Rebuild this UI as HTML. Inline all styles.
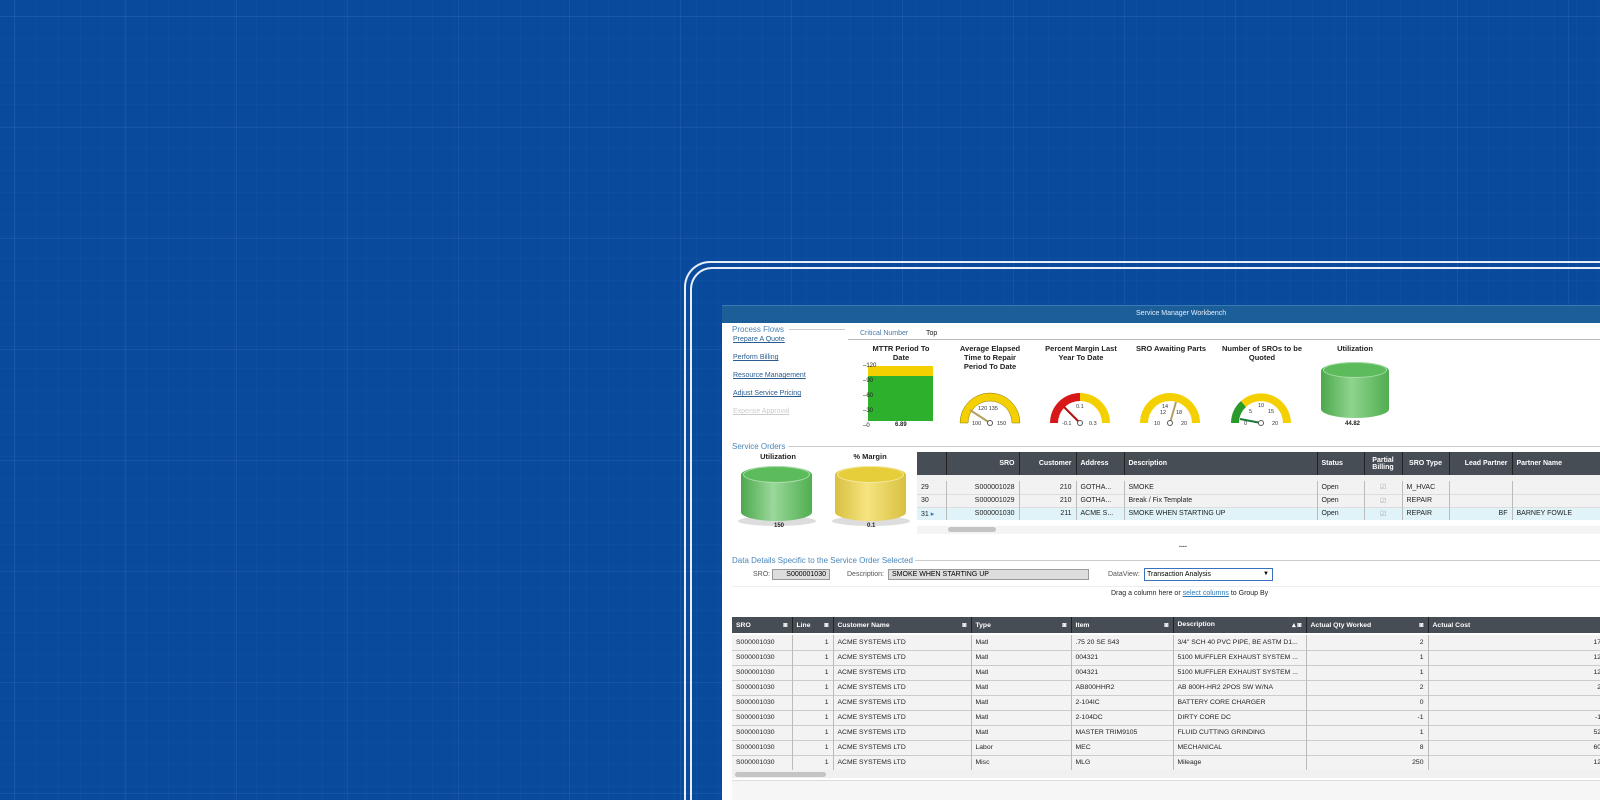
<!DOCTYPE html>
<html><head><meta charset="utf-8"><style>
*{margin:0;padding:0;box-sizing:border-box}
html,body{width:1600px;height:800px;overflow:hidden}
body{font-family:"Liberation Sans",sans-serif;background:#0a4a9c}
#w{position:relative;width:1600px;height:800px;overflow:hidden;
background-color:#0a4a9c;
background-image:
linear-gradient(rgba(90,150,230,.14) 1px,transparent 1px),
linear-gradient(90deg,rgba(90,150,230,.14) 1px,transparent 1px),
linear-gradient(rgba(90,150,230,.05) 1px,transparent 1px),
linear-gradient(90deg,rgba(90,150,230,.05) 1px,transparent 1px);
background-size:111px 111px,111px 111px,22px 22px,22px 22px;
background-position:14px 16px,14px 16px,14px 16px,14px 16px}
.a{position:absolute}
.t{position:absolute;font-size:7px;color:#222;white-space:nowrap}
.lk{position:absolute;font-size:7px;color:#2a5d8f;text-decoration:underline;white-space:nowrap}
.sec{position:absolute;font-size:8px;color:#4a86b8;white-space:nowrap}
.b{font-weight:bold;text-align:center;font-size:7.5px;color:#222;position:absolute;line-height:9px}
table{border-collapse:collapse;position:absolute;font-size:7px;color:#222}
td,th{border-right:1px solid #bbb;padding:0 4px;white-space:nowrap;overflow:hidden}
th{background:#474d55;color:#fff;font-weight:bold;border-right:1px solid #222}
</style></head><body><div id="w">
<div class="a" style="left:684px;top:261px;width:916px;height:539px;border:2px solid #e8eef7;border-right:none;border-bottom:none;border-radius:26px 0 0 0"></div>
<div class="a" style="left:690px;top:267px;width:910px;height:533px;border:2px solid #e8eef7;border-right:none;border-bottom:none;border-radius:22px 0 0 0"></div>
<div class="a" style="left:722px;top:305px;width:878px;height:495px;background:#fff"></div>
<div class="a" style="left:722px;top:305px;width:878px;height:18px;background:#1c5e98;border-top:1px solid #3a7ab4"></div>
<div class="t" style="left:1136px;top:310px;color:#e6eef8">Service Manager Workbench</div>

<div class="sec" style="left:732px;top:325px">Process Flows</div>
<div class="a" style="left:789px;top:329px;width:56px;height:1px;background:#ccc"></div>
<div class="lk" style="left:733px;top:336px">Prepare A Quote</div>
<div class="lk" style="left:733px;top:354px">Perform Billing</div>
<div class="lk" style="left:733px;top:372px">Resource Management</div>
<div class="lk" style="left:733px;top:390px">Adjust Service Pricing</div>
<div class="lk" style="left:733px;top:408px;color:#ccc">Expense Approval</div>

<div class="t" style="left:860px;top:330px;color:#4a7aa8">Critical Number</div>
<div class="t" style="left:926px;top:330px">Top</div>
<div class="a" style="left:848px;top:339px;width:752px;height:1px;background:#bbb"></div>

<div class="b" style="left:866px;top:344px;width:70px">MTTR Period To Date</div>
<div class="a" style="left:868px;top:366px;width:65px;height:10px;background:#f5d000"></div>
<div class="a" style="left:868px;top:376px;width:65px;height:45px;background:#2db12d"></div>
<div class="t" style="left:863px;top:363px;font-size:6px;line-height:7.5px">–120<br><br>–90<br><br>–60<br><br>–30<br><br>–0</div>
<div class="t" style="left:895px;top:422px;font-size:6px;font-weight:bold">6.89</div>

<div class="b" style="left:955px;top:344px;width:70px">Average Elapsed Time to Repair Period To Date</div>
<div class="b" style="left:1045px;top:344px;width:72px">Percent Margin Last Year To Date</div>
<div class="b" style="left:1135px;top:344px;width:72px">SRO Awaiting Parts</div>
<div class="b" style="left:1222px;top:344px;width:80px">Number of SROs to be Quoted</div>
<div class="b" style="left:1320px;top:344px;width:70px">Utilization</div>

<svg class="a" style="left:955px;top:390px" width="340" height="40" viewBox="955 390 340 40">
<g>
<path d="M960 423 A30 30 0 0 1 1020 423 L1012 423 A22 22 0 0 0 968 423Z" fill="#f5d000" stroke="#8a7a00" stroke-width=".5"/>
<line x1="990" y1="423" x2="970" y2="410" stroke="#b0a060" stroke-width="2"/>
<circle cx="990" cy="423" r="2.5" fill="#fff" stroke="#555"/>
<path d="M1050 423 A30 30 0 0 1 1080 393 L1080 401 A22 22 0 0 0 1058 423Z" fill="#d81818"/>
<path d="M1080 393 A30 30 0 0 1 1110 423 L1102 423 A22 22 0 0 0 1080 401Z" fill="#f5d000"/>
<line x1="1080" y1="423" x2="1064" y2="407" stroke="#b01010" stroke-width="2"/>
<circle cx="1080" cy="423" r="2.5" fill="#fff" stroke="#555"/>
<path d="M1140 423 A30 30 0 0 1 1200 423 L1192 423 A22 22 0 0 0 1148 423Z" fill="#f5d000"/>
<line x1="1170" y1="423" x2="1176" y2="402" stroke="#b0a060" stroke-width="2"/>
<circle cx="1170" cy="423" r="2.5" fill="#fff" stroke="#555"/>
<path d="M1231 423 A30 30 0 0 1 1241 401 L1246 407 A22 22 0 0 0 1239 423Z" fill="#2a9a2a"/>
<path d="M1241 401 A30 30 0 0 1 1291 423 L1283 423 A22 22 0 0 0 1246 407Z" fill="#f5d000"/>
<line x1="1261" y1="423" x2="1240" y2="419" stroke="#1a7a3a" stroke-width="2"/>
<circle cx="1261" cy="423" r="2.5" fill="#fff" stroke="#555"/>
</g>
<g font-size="5.5" fill="#333" font-family="Liberation Sans">
<text x="972" y="425">100</text><text x="997" y="425">150</text><text x="978" y="410">120 135</text>
<text x="1062" y="425">-0.1</text><text x="1089" y="425">0.3</text><text x="1076" y="408">0.1</text>
<text x="1154" y="425">10</text><text x="1181" y="425">20</text><text x="1160" y="414">12</text><text x="1176" y="414">18</text><text x="1162" y="408">14</text>
<text x="1244" y="425">0</text><text x="1272" y="425">20</text><text x="1249" y="413">5</text><text x="1268" y="413">15</text><text x="1258" y="407">10</text>
</g>
</svg>

<div class="a" style="left:1321px;top:362px;width:68px;height:56px;border-radius:34px/9px;background:linear-gradient(90deg,#4da84d,#8ed48e 45%,#4fae4f);"></div>
<div class="a" style="left:1323px;top:362px;width:64px;height:16px;border-radius:50%;background:#5cbc5c;border:1px solid #a8dca8"></div>
<div class="t" style="left:1345px;top:421px;font-size:6px;font-weight:bold">44.82</div>

<div class="sec" style="left:732px;top:442px">Service Orders</div>
<div class="a" style="left:788px;top:446px;width:812px;height:1px;background:#ccc"></div>
<div class="b" style="left:750px;top:452px;width:56px">Utilization</div>
<div class="b" style="left:840px;top:452px;width:60px">% Margin</div>
<div class="a" style="left:738px;top:516px;width:78px;height:10px;border-radius:50%;background:#ddd"></div>
<div class="a" style="left:741px;top:466px;width:71px;height:55px;border-radius:36px/9px;background:linear-gradient(90deg,#4da84d,#9ad89a 45%,#4fae4f)"></div>
<div class="a" style="left:743px;top:466px;width:67px;height:17px;border-radius:50%;background:#5cbc5c;border:1px solid #b0dcb0"></div>
<div class="a" style="left:832px;top:516px;width:78px;height:10px;border-radius:50%;background:#ddd"></div>
<div class="a" style="left:835px;top:466px;width:71px;height:55px;border-radius:36px/9px;background:linear-gradient(90deg,#d8c040,#f6e480 45%,#d8c040)"></div>
<div class="a" style="left:837px;top:466px;width:67px;height:17px;border-radius:50%;background:#e6cd3a;border:1px solid #f4e8a0"></div>
<div class="t" style="left:774px;top:523px;font-size:6px;font-weight:bold">150</div>
<div class="t" style="left:867px;top:523px;font-size:6px;font-weight:bold">0.1</div>

<table style="left:917px;top:452px;width:700px">
<tr style="height:23px"><th style="width:29px"></th><th style="width:73px;text-align:right">SRO</th><th style="width:57px;text-align:right">Customer</th><th style="width:48px;text-align:left">Address</th><th style="width:193px;text-align:left">Description</th><th style="width:47px;text-align:left">Status</th><th style="width:38px">Partial<br>Billing</th><th style="width:47px">SRO Type</th><th style="width:63px;text-align:right">Lead Partner</th><th style="text-align:left">Partner Name</th></tr>
<tr style="height:6px;background:#f0f0f0"><td colspan="10" style="border:0"></td></tr>
<tr style="height:13px;background:#f2f2f2;border-bottom:1px solid #ddd"><td>29</td><td style="text-align:right">S000001028</td><td style="text-align:right">210</td><td>GOTHA...</td><td>SMOKE</td><td>Open</td><td style="text-align:center;color:#aaa">☑</td><td>M_HVAC</td><td></td><td></td></tr>
<tr style="height:13px;background:#f2f2f2;border-bottom:1px solid #ddd"><td>30</td><td style="text-align:right">S000001029</td><td style="text-align:right">210</td><td>GOTHA...</td><td>Break / Fix Template</td><td>Open</td><td style="text-align:center;color:#aaa">☑</td><td>REPAIR</td><td></td><td></td></tr>
<tr style="height:13px;background:#dff3f8"><td>31 <span style="color:#3a70c0">▸</span></td><td style="text-align:right">S000001030</td><td style="text-align:right">211</td><td>ACME S...</td><td>SMOKE WHEN STARTING UP</td><td>Open</td><td style="text-align:center;color:#aaa">☑</td><td>REPAIR</td><td style="text-align:right">BF</td><td>BARNEY FOWLE</td></tr>
</table>
<div class="a" style="left:917px;top:526px;width:683px;height:8px;background:#f4f4f4"></div>
<div class="a" style="left:948px;top:527px;width:48px;height:5px;border-radius:3px;background:#c4c4c4"></div>
<div class="t" style="left:1179px;top:542px;font-weight:bold">....</div>

<div class="sec" style="left:732px;top:556px">Data Details Specific to the Service Order Selected</div>
<div class="a" style="left:915px;top:560px;width:685px;height:1px;background:#ccc"></div>
<div class="t" style="left:753px;top:571px;color:#555">SRO:</div>
<div class="a" style="left:772px;top:569px;width:58px;height:11px;background:#ddd;border:1px solid #999;font-size:7px;text-align:right;padding:1px 3px">S000001030</div>
<div class="t" style="left:847px;top:571px;color:#555">Description:</div>
<div class="a" style="left:888px;top:569px;width:201px;height:11px;background:#ddd;border:1px solid #999;font-size:7px;padding:1px 3px">SMOKE WHEN STARTING UP</div>
<div class="t" style="left:1108px;top:571px;color:#555">DataView:</div>
<div class="a" style="left:1144px;top:568px;width:129px;height:13px;background:#fff;border:1px solid #3a70c0;font-size:7px;padding:2px 2px">Transaction Analysis<span style="position:absolute;right:3px;font-size:6px">▼</span></div>
<div class="a" style="left:732px;top:586px;width:868px;height:31px;background:#fff;border-top:1px solid #eee"></div>
<div class="t" style="left:1111px;top:590px">Drag a column here or <span style="color:#2a7ab8;text-decoration:underline">select columns</span> to Group By</div>

<table style="left:732px;top:617px;width:870px;font-size:6.8px">
<tr style="height:16px"><th style="width:60px;text-align:left">SRO <span style="float:right">◙</span></th><th style="width:41px;text-align:left">Line <span style="float:right">◙</span></th><th style="width:138px;text-align:left">Customer Name <span style="float:right">◙</span></th><th style="width:100px;text-align:left">Type <span style="float:right">◙</span></th><th style="width:102px;text-align:left">Item <span style="float:right">◙</span></th><th style="width:133px;text-align:left">Description <span style="float:right">▴ ◙</span></th><th style="width:122px;text-align:left">Actual Qty Worked <span style="float:right">◙</span></th><th style="text-align:left">Actual Cost</th></tr>
</table>
<table style="left:732px;top:635px;width:870px;font-size:6.8px">
<colgroup><col style="width:60px"><col style="width:41px"><col style="width:138px"><col style="width:100px"><col style="width:102px"><col style="width:133px"><col style="width:122px"><col></colgroup>
<tr style="height:15px;background:#f3f3f3;border-bottom:1px solid #ccc"><td>S000001030</td><td style="text-align:right">1</td><td>ACME SYSTEMS LTD</td><td>Matl</td><td>.75 20 SE S43</td><td>3/4" SCH 40 PVC PIPE, BE ASTM D1...</td><td style="text-align:right">2</td><td style="text-align:right;padding-right:0">17</td></tr>
<tr style="height:15px;background:#f3f3f3;border-bottom:1px solid #ccc"><td>S000001030</td><td style="text-align:right">1</td><td>ACME SYSTEMS LTD</td><td>Matl</td><td>004321</td><td>5100 MUFFLER EXHAUST SYSTEM ...</td><td style="text-align:right">1</td><td style="text-align:right;padding-right:0">12</td></tr>
<tr style="height:15px;background:#f3f3f3;border-bottom:1px solid #ccc"><td>S000001030</td><td style="text-align:right">1</td><td>ACME SYSTEMS LTD</td><td>Matl</td><td>004321</td><td>5100 MUFFLER EXHAUST SYSTEM ...</td><td style="text-align:right">1</td><td style="text-align:right;padding-right:0">12</td></tr>
<tr style="height:15px;background:#f3f3f3;border-bottom:1px solid #ccc"><td>S000001030</td><td style="text-align:right">1</td><td>ACME SYSTEMS LTD</td><td>Matl</td><td>AB800HHR2</td><td>AB 800H-HR2 2POS SW W/NA</td><td style="text-align:right">2</td><td style="text-align:right;padding-right:0">2</td></tr>
<tr style="height:15px;background:#f3f3f3;border-bottom:1px solid #ccc"><td>S000001030</td><td style="text-align:right">1</td><td>ACME SYSTEMS LTD</td><td>Matl</td><td>2-104IC</td><td>BATTERY CORE CHARGER</td><td style="text-align:right">0</td><td></td></tr>
<tr style="height:15px;background:#f3f3f3;border-bottom:1px solid #ccc"><td>S000001030</td><td style="text-align:right">1</td><td>ACME SYSTEMS LTD</td><td>Matl</td><td>2-104DC</td><td>DIRTY CORE DC</td><td style="text-align:right">-1</td><td style="text-align:right;padding-right:0">-1</td></tr>
<tr style="height:15px;background:#f3f3f3;border-bottom:1px solid #ccc"><td>S000001030</td><td style="text-align:right">1</td><td>ACME SYSTEMS LTD</td><td>Matl</td><td>MASTER TRIM9105</td><td>FLUID CUTTING GRINDING</td><td style="text-align:right">1</td><td style="text-align:right;padding-right:0">52</td></tr>
<tr style="height:15px;background:#f3f3f3;border-bottom:1px solid #ccc"><td>S000001030</td><td style="text-align:right">1</td><td>ACME SYSTEMS LTD</td><td>Labor</td><td>MEC</td><td>MECHANICAL</td><td style="text-align:right">8</td><td style="text-align:right;padding-right:0">60</td></tr>
<tr style="height:15px;background:#f3f3f3;border-bottom:1px solid #ccc"><td>S000001030</td><td style="text-align:right">1</td><td>ACME SYSTEMS LTD</td><td>Misc</td><td>MLG</td><td>Mileage</td><td style="text-align:right">250</td><td style="text-align:right;padding-right:0">12</td></tr>
</table>
<div class="a" style="left:732px;top:770px;width:868px;height:8px;background:#f0f0f0"></div>
<div class="a" style="left:735px;top:772px;width:91px;height:5px;border-radius:3px;background:#c4c4c4"></div>
<div class="a" style="left:732px;top:780px;width:868px;height:20px;background:#f6f6f6;border-top:1px solid #ddd"></div>
</div></body></html>
